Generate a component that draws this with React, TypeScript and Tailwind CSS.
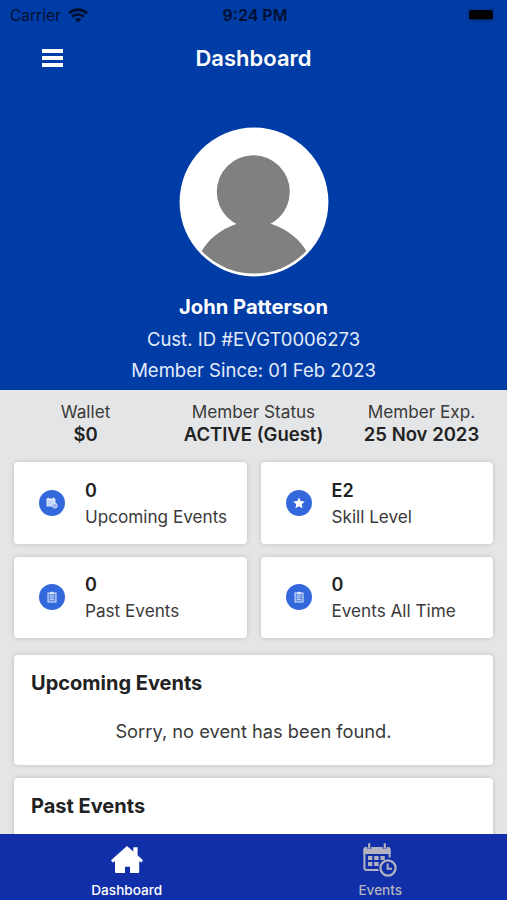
import type { ReactNode } from "react";

interface IconProps {
  className?: string;
}

interface StatCardProps {
  value: string;
  label: string;
  icon: ReactNode;
}

function WifiIcon() {
  return (
    <svg width="20" height="15" viewBox="0 0 20 15" fill="none" stroke="currentColor">
      <path d="M1 5.4C6 0.4 14 0.4 19 5.4" strokeWidth="3" />
      <path d="M4.1 8.8C7.5 5.6 12.5 5.6 15.9 8.8" strokeWidth="2.6" />
      <path d="M10 14.6L6.7 11.3C8.7 9.6 11.3 9.6 13.3 11.3Z" fill="currentColor" stroke="none" />
    </svg>
  );
}

function BatteryIcon() {
  return (
    <svg width="34" height="15" viewBox="0 0 34 15">
      <rect x="1" y="0.3" width="28" height="13" rx="4" fill="none" stroke="#00308c" strokeWidth="1" />
      <rect x="3" y="2" width="24" height="9.6" rx="2" fill="#000" />
      <path d="M31 5V9C32.4 8.3 32.4 5.7 31 5Z" fill="#00308c" />
    </svg>
  );
}

function CalendarClockIcon({ className }: IconProps) {
  return (
    <svg viewBox="0 0 34 34" className={className} fill="none" stroke="currentColor">
      <path d="M15.5 27H3.6C2.3 27 1.4 26.2 1.4 25V6.8H26.6V14.5" strokeWidth="2" />
      <path d="M0.6 5.6Q0.6 4 2.4 4H4.3V6.4H8.2V4H19.8V6.4H23.7V4H25.6Q27.4 4 27.4 5.6V11H0.6Z" fill="currentColor" stroke="none" />
      <path d="M6.2 0.2V5.4M21.8 0.2V5.4" strokeWidth="2.2" />
      <path
        d="M5 13H9.4V17H5ZM11.2 13H15.6V17H11.2ZM17.4 13H21.8V17H17.4ZM5 19H9.4V23H5ZM11.2 19H15.6V23H11.2Z"
        fill="currentColor"
        stroke="none"
      />
      <circle cx="25" cy="25" r="7.6" strokeWidth="2.2" />
      <path d="M24.6 20.4V25.8H29" strokeWidth="2" />
    </svg>
  );
}

// Heavier cut of the calendar, used inside the small badge
function CalendarBadgeIcon() {
  return (
    <svg width="12" height="12" viewBox="0 0 12 12" className="text-[#e6edfc]">
      <path d="M0.5 1.4H1.6V0.5H2.8V1.4H6.8V0.5H8V1.4H9.4V6H8.2Q6 6.4 6 9.6H0.5Z" fill="currentColor" />
      <path d="M1.6 4.3H8.2M1.6 6.3H6.2M1.6 8.2H5.4" stroke="#3268dc" strokeWidth="0.5" strokeDasharray="1.3 0.7" />
      <circle cx="8.9" cy="8.7" r="2.4" fill="#7f9fe8" stroke="currentColor" strokeWidth="0.9" />
      <path d="M8.8 7.2V8.9H10.1" fill="none" stroke="currentColor" strokeWidth="0.7" />
    </svg>
  );
}

function HomeIcon() {
  return (
    <svg width="32" height="28" viewBox="0 0 32 28" fill="currentColor">
      <path d="M16 0L22.3 5.4V1.2H26.6V9.2L32 14.2L30.5 16.4L28.2 15.2V26Q28.2 27 27.2 27H19V20.8H14V27H5Q4 27 4 26V15.2L1.6 16.4L0 14.2Z" />
    </svg>
  );
}

function StarIcon() {
  return (
    <svg width="12" height="12" viewBox="0 0 24 24" fill="#fff">
      <path d="M12 0.8L15.4 8.2L23.4 9.1L17.5 14.6L19.1 22.6L12 18.6L4.9 22.6L6.5 14.6L0.6 9.1L8.6 8.2Z" />
    </svg>
  );
}

function ClipboardIcon() {
  return (
    <svg width="10" height="12" viewBox="0 0 10 12" fill="none" className="text-[#dce6fb]">
      <rect x="1" y="2" width="8" height="9" fill="currentColor" fillOpacity="0.25" stroke="currentColor" strokeWidth="1" />
      <path d="M3 1.2H4.1Q5 0 5.9 1.2H7V3.2H3Z" fill="currentColor" />
      <path d="M2.8 5H7.2M2.8 6.8H6.4M2.8 8.6H7.2" stroke="currentColor" strokeWidth="0.8" />
    </svg>
  );
}

function Avatar() {
  return (
    <svg width="150" height="150" viewBox="0 0 150 150" className="shrink-0">
      <defs>
        <clipPath id="avatar-clip">
          <circle cx="75" cy="75" r="71.6" />
        </clipPath>
      </defs>
      <circle cx="75" cy="75" r="74.4" fill="#fff" />
      <g fill="#808080" clipPath="url(#avatar-clip)">
        <circle cx="74.3" cy="64.8" r="36.5" />
        <circle cx="75" cy="155.5" r="61" />
      </g>
    </svg>
  );
}

function StatCard({ value, label, icon }: StatCardProps) {
  return (
    <div className="flex items-center rounded-[4px] bg-white pl-[25px] shadow-[0_0_5px_rgba(0,0,0,0.16)]">
      <div className="flex size-[26px] shrink-0 items-center justify-center rounded-full bg-[#3268dc]">{icon}</div>
      <div className="ml-5 whitespace-nowrap text-[#222]">
        <p className="text-[18px] leading-[27px] font-semibold">{value}</p>
        <p className="text-[17.15px] leading-[25px] text-[#3a3a3a]">{label}</p>
      </div>
    </div>
  );
}

function Summary({ label, value }: { label: string; value: string }) {
  return (
    <div>
      <p className="text-[17.15px] leading-[22px] text-[#3a3a3a]">{label}</p>
      <p className="text-[18.5px] leading-[22px] font-semibold">{value}</p>
    </div>
  );
}

export default function App() {
  return (
    <div className="flex h-[900px] w-[507px] flex-col overflow-hidden bg-[#e3e5e6] font-['Inter',sans-serif] text-[#222]">
      <header className="flex h-[390px] shrink-0 flex-col bg-[#003ca6] text-white">
        {/* Status bar */}
        <div className="grid h-[30px] grid-cols-3 items-center pr-[7px] pl-[10px] text-[#000f30]">
          <div className="flex items-center gap-[7px]">
            <span className="pt-px text-[15.5px] leading-5">Carrier</span>
            <WifiIcon />
          </div>
          <span className="text-center text-[16px] font-semibold">9:24 PM</span>
          <div className="flex justify-end">
            <BatteryIcon />
          </div>
        </div>

        <div className="grid h-[55px] grid-cols-[64px_1fr_64px] items-center">
          <button className="ml-[42px] flex w-[21px] flex-col gap-[3px]">
            <span className="h-1 w-full bg-white" />
            <span className="h-1 w-full bg-white" />
            <span className="h-1 w-full bg-white" />
          </button>
          <h1 className="pt-[2px] text-center text-[22px] font-semibold">Dashboard</h1>
        </div>

        {/* Profile */}
        <div className="flex flex-col items-center pt-[42px]">
          <Avatar />
          <h2 className="mt-[15px] text-[20.2px] leading-[30px] font-bold">John Patterson</h2>
          <p className="mt-[2px] text-[18.5px] leading-[31px] text-[#e4ecfa]">Cust. ID #EVGT0006273</p>
          <p className="text-[18.5px] leading-[30px] text-[#e4ecfa]">Member Since: 01 Feb 2023</p>
        </div>
      </header>

      <main className="flex min-h-0 flex-1 flex-col px-[14px]">
        <div className="grid h-[72px] shrink-0 grid-cols-[143px_1fr_143px] pt-[11px] text-center whitespace-nowrap">
          <Summary label="Wallet" value="$0" />
          <Summary label="Member Status" value="ACTIVE (Guest)" />
          <Summary label="Member Exp." value="25 Nov 2023" />
        </div>

        <div className="grid shrink-0 auto-rows-[81.5px] grid-cols-2 gap-x-[14px] gap-y-[13px]">
          <StatCard value="0" label="Upcoming Events" icon={<CalendarBadgeIcon />} />
          <StatCard value="E2" label="Skill Level" icon={<StarIcon />} />
          <StatCard value="0" label="Past Events" icon={<ClipboardIcon />} />
          <StatCard value="0" label="Events All Time" icon={<ClipboardIcon />} />
        </div>

        <section className="mt-[17px] h-[110px] shrink-0 rounded-[4px] bg-white px-[17px] pt-[13px] shadow-[0_0_5px_rgba(0,0,0,0.16)]">
          <h3 className="text-[20px] leading-[30px] font-bold">Upcoming Events</h3>
          <p className="mt-[18px] text-center text-[18.3px] leading-[30px] text-[#3a3a3a]">Sorry, no event has been found.</p>
        </section>

        <section className="mt-[13px] h-[110px] shrink-0 rounded-[4px] bg-white px-[17px] pt-[13px] shadow-[0_0_5px_rgba(0,0,0,0.16)]">
          <h3 className="text-[20px] leading-[30px] font-bold">Past Events</h3>
        </section>
      </main>

      <nav className="grid h-[66px] shrink-0 grid-cols-2 bg-[#102fa8] text-[13.6px] leading-4 font-medium">
        <a className="flex flex-col items-center pt-[12px] text-white">
          <HomeIcon />
          <span className="mt-2">Dashboard</span>
        </a>
        <a className="flex flex-col items-center pt-[9px] text-[#b3b3c0]">
          <CalendarClockIcon className="size-[34px]" />
          <span className="mt-[5px]">Events</span>
        </a>
      </nav>
    </div>
  );
}
